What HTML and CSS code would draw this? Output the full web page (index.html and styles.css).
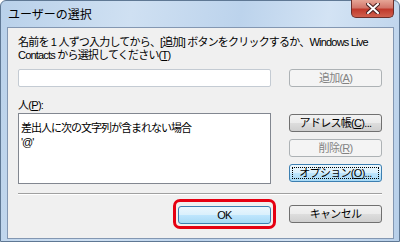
FILE: index.html
```html
<!DOCTYPE html>
<html lang="ja">
  <head>
    <meta charset="utf-8" />
    <title>ユーザーの選択</title>
    <link rel="stylesheet" href="styles.css">
  </head>
  <body>
    <div class="window">
      <div class="titlebar">
        <span class="title">ユーザーの選択</span>
        <span class="close">
          <svg width="14" height="11" viewBox="0 0 14 11">
            <path d="M2 1 L12 10 M12 1 L2 10" stroke="#4a2020" stroke-width="4" stroke-linecap="square" />
            <path d="M2 1 L12 10 M12 1 L2 10" stroke="#ffffff" stroke-width="2" stroke-linecap="square" />
          </svg>
        </span>
      </div>

      <div class="client">
        <p class="intro">
          名前を 1 人ずつ入力してから、[追加] ボタンをクリックするか、Windows Live<br>
          Contacts から選択してください(<u>T</u>)
        </p>

        <div class="row">
          <div class="textbox"></div>
          <span class="btn disabled">追加(<u>A</u>)</span>
        </div>

        <div class="label">人(<u>P</u>):</div>

        <div class="row people">
          <div class="listbox">
            差出人に次の文字列が含まれない場合<br>
            '@'
          </div>
          <div class="side">
            <span class="btn">アドレス帳(<u>C</u>)...</span>
            <span class="btn disabled">削除(<u>R</u>)</span>
            <span class="btn focus"><span class="focusrect">オプション(<u>O</u>)...</span></span>
          </div>
        </div>

        <div class="separator"></div>

        <div class="footer">
          <span class="highlight"><span class="btn default">OK</span></span>
          <span class="btn">キャンセル</span>
        </div>
      </div>
    </div>
  </body>
</html>
```

FILE: styles.css
```css
html, body {
  margin: 0;
  padding: 0;
  height: 100%;
}
body {
  font-family: "Liberation Sans", "Noto Sans CJK JP", sans-serif;
  font-size: 11px;
  letter-spacing: -0.7px;
  color: #000000;
  background: #ffffff;
}

.window {
  width: 400px;
  height: 242px;
  box-sizing: border-box;
  display: flex;
  flex-direction: column;
  padding: 0 5px 2px 6px;
  border: 1px solid #5f7894;
  border-radius: 6px 6px 0 0;
  background: linear-gradient(100deg, #b9d1ea 0%, #cfe0f2 30%, #bcd3ec 55%, #d3e3f4 75%, #b7cfe9 100%);
}

.titlebar {
  height: 26px;
  display: flex;
  align-items: flex-start;
}
.title {
  margin-top: 6px;
  margin-left: 1px;
  font-size: 12px;
  line-height: 16px;
  letter-spacing: 0;
}
.close {
  margin-left: auto;
  margin-top: -1px;
  width: 43px;
  height: 18px;
  box-sizing: border-box;
  display: flex;
  align-items: center;
  justify-content: center;
  border: 1px solid #6b2e2a;
  border-top: none;
  border-radius: 0 0 5px 5px;
  background: linear-gradient(#e6a596 0%, #d2766a 45%, #c0392b 55%, #d0604e 100%);
}

.client {
  flex: 1;
  display: flex;
  flex-direction: column;
  padding: 8px 11px 0 10px;
  border: 1px solid #8397b2;
  background: #f0f0f0;
}

.intro {
  margin: 0;
  line-height: 13px;
  white-space: nowrap;
  letter-spacing: -0.8px;
}

.row {
  display: flex;
  justify-content: space-between;
  margin-top: 7px;
}
.textbox {
  width: 253px;
  height: 18px;
  box-sizing: border-box;
  border: 1px solid #c4cbd3;
  border-radius: 2px;
  background: #ffffff;
}

.label {
  margin-top: 12px;
  line-height: 13px;
}

.row.people {
  margin-top: 1px;
}
.listbox {
  width: 253px;
  height: 71px;
  box-sizing: border-box;
  padding: 7px 2px 0;
  border: 1px solid #828790;
  background: #ffffff;
  line-height: 14px;
  letter-spacing: -1px;
}
.side {
  display: flex;
  flex-direction: column;
  gap: 7px;
  padding-top: 1px;
}

.btn {
  width: 93px;
  height: 18px;
  box-sizing: border-box;
  display: flex;
  align-items: center;
  justify-content: center;
  border: 1px solid #707070;
  border-radius: 3px;
  background: linear-gradient(#f2f2f2 0%, #ebebeb 50%, #dddddd 51%, #cfcfcf 100%);
  line-height: 12px;
}
.btn.disabled {
  border-color: #adb2b5;
  background: #f4f4f4;
  color: #838383;
}
.btn.focus {
  border-color: #3c7fb1;
  background: linear-gradient(#eaf6fd 0%, #d9f0fc 50%, #bee6fd 51%, #a7d9f5 100%);
  padding: 2px;
}
.focusrect {
  flex: 1;
  align-self: stretch;
  display: flex;
  align-items: center;
  justify-content: center;
  border: 1px dotted #000000;
}
.btn.default {
  border-color: #3c7fb1;
  background: linear-gradient(#eaf6fd 0%, #d9f0fc 50%, #bee6fd 51%, #a7d9f5 100%);
}

.separator {
  margin-top: 9px;
  border-top: 1px solid #a0a0a0;
  border-bottom: 1px solid #ffffff;
}

.footer {
  display: flex;
  justify-content: flex-end;
  align-items: center;
  gap: 13px;
  margin-top: 4px;
}
.highlight {
  padding: 4px 2px 2px 2px;
  border: 3px solid #e60012;
  border-radius: 7px;
}
```
